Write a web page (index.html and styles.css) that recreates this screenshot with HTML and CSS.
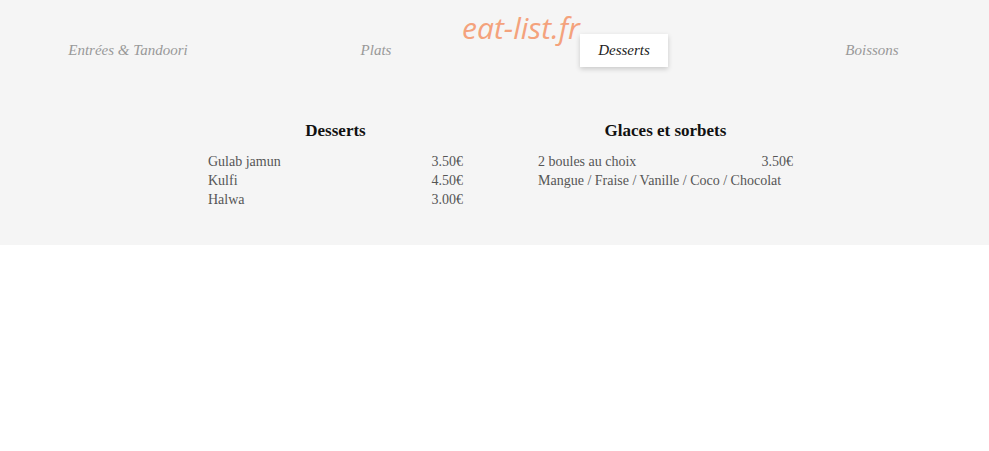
FILE: index.html
```html
<!DOCTYPE html>
<html>
	<head>
		<meta charset="utf-8">
		<title>eat-list.fr - Carte</title>
		<link rel="stylesheet" href="styles.css">
	</head>
	<body>
		<div class="carte">
			<div class="logo">eat-list.fr</div>
			<ul class="tabs">
				<li class="tab"><span>Entrées &amp; Tandoori</span></li>
				<li class="tab"><span>Plats</span></li>
				<li class="tab active"><span>Desserts</span></li>
				<li class="tab"><span>Boissons</span></li>
			</ul>
			<div class="menu">
				<div class="section">
					<h2>Desserts</h2>
					<ul class="items">
						<li class="item"><span>Gulab jamun</span><span>3.50€</span></li>
						<li class="item"><span>Kulfi</span><span>4.50€</span></li>
						<li class="item"><span>Halwa</span><span>3.00€</span></li>
					</ul>
				</div>
				<div class="section">
					<h2>Glaces et sorbets</h2>
					<ul class="items">
						<li class="item"><span>2 boules au choix</span><span>3.50€</span></li>
						<li class="item"><span>Mangue / Fraise / Vanille / Coco / Chocolat</span></li>
					</ul>
				</div>
			</div>
		</div>
	</body>
</html>
```

FILE: styles.css
```css
*{
	margin:0;
	padding:0;
	box-sizing:border-box;
}
body{
	background:#fff;
	font-family:"Liberation Serif", "Times New Roman", serif;
	overflow:hidden;
}
ul{
	list-style:none;
}
.carte{
	position:relative;
	height:245px;
	background:#f5f5f5;
	padding-top:34px;
}
.logo{
	position:absolute;
	top:8px;
	left:462px;
	font-family:"Open Sans", sans-serif;
	font-style:italic;
	font-size:30px;
	line-height:40px;
	color:#f4a27c;
	z-index:2;
}
.tabs{
	display:grid;
	grid-template-columns:repeat(4, 248px);
	padding-left:4px;
}
.tab{
	display:flex;
	justify-content:center;
}
.tab span{
	display:block;
	height:33px;
	line-height:33px;
	padding:0 18px;
	font-style:italic;
	font-size:15px;
	color:#999;
}
.tab.active span{
	background:#fff;
	color:#222;
	box-shadow:0 2px 5px rgba(0,0,0,0.18);
}
.menu{
	display:flex;
	justify-content:center;
	gap:75px;
	padding-top:52px;
	padding-left:12px;
}
.section{
	width:255px;
}
.section h2{
	text-align:center;
	font-size:17px;
	font-weight:bold;
	color:#111;
	line-height:24px;
	margin-bottom:9px;
}
.item{
	display:flex;
	justify-content:space-between;
	font-size:14px;
	line-height:19px;
	color:#555;
	white-space:nowrap;
}
```
